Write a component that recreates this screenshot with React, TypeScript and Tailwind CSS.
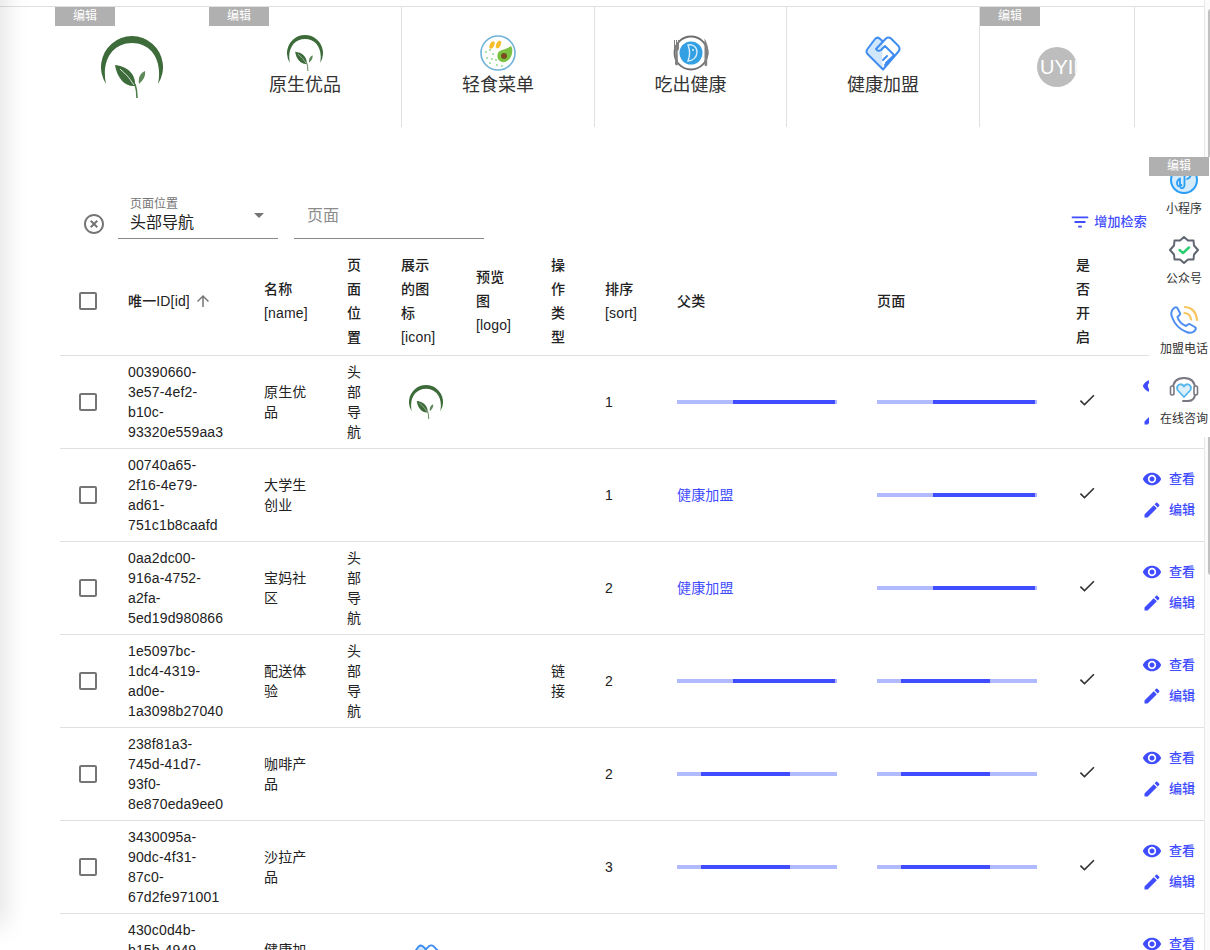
import React from 'react';

const BLUE = '#3f4cff';

const LeafLogo: React.FC<{ className: string }> = ({ className }) => (
  <svg viewBox="0 0 62 62" className={className}>
    <path d="M5 48 A31 31 0 1 1 57 48 C62 24 50 7 31 7 C12 7 0 24 5 48Z" fill="#3d6b3a" />
    <path d="M14 29 C25 30 35 37 34 50 C24 51 16 42 14 29Z" fill="#3d6b3a" />
    <path d="M19 33 Q28 40 33 49" stroke="#fff" strokeWidth="0.8" fill="none" />
    <path d="M44 35 C45 41 41 45 38 48 C37 42 39 37 44 35Z" fill="#5d8a58" />
    <path d="M34 48 Q36 54 36 62" stroke="#4f7d4b" strokeWidth="1.6" fill="none" />
  </svg>
);

const FoodIcon = () => (
  <svg viewBox="0 0 36 36" className="w-9 h-9">
    <circle cx="18" cy="18" r="17" fill="#fff" stroke="#6fb2d8" strokeWidth="1.6" />
    <ellipse cx="12" cy="10" rx="2.2" ry="4" transform="rotate(25 12 10)" fill="#f8bd2c" />
    <ellipse cx="18.5" cy="9.5" rx="2.2" ry="4" transform="rotate(25 18.5 9.5)" fill="#f8bd2c" />
    <path d="M31 11 C34 15 32 25 25 27 C19 28 16 23 18 18 C20 14 26 15 31 11Z" fill="#7cc242" />
    <circle cx="24" cy="21" r="3" fill="#7a4b1e" />
    <g fill="#8fdc8a">
      <circle cx="6" cy="17" r="1" />
      <circle cx="10" cy="15" r="1" />
      <circle cx="13" cy="19" r="1" />
      <circle cx="7" cy="23" r="1" />
      <circle cx="12" cy="24" r="1" />
      <circle cx="16" cy="25" r="1" />
      <circle cx="10" cy="28" r="1" />
      <circle cx="17" cy="30" r="1" />
      <circle cx="22" cy="31" r="1" />
    </g>
  </svg>
);

const PlateIcon = () => (
  <svg viewBox="0 0 36 36" className="w-9 h-9">
    <circle cx="18" cy="18" r="16.5" fill="#fff" stroke="#6f6f6f" strokeWidth="1.8" />
    <circle cx="18" cy="18" r="11.5" fill="#34a0e4" />
    <path d="M1 5 H2 V10 H3 V5 H4 V10 H5 V5 H6 V13 Q6 15.5 4.6 16 L5 29 Q3.5 32 2 29 L2.4 16 Q1 15.5 1 13Z" fill="#808080" />
    <path d="M31.5 3.5 Q36 11 35.5 20 L34.2 20 L34.2 30 Q33 32.5 31.5 30 Z" fill="#808080" />
    <path d="M15 10 C20 9 24 12 24 17 C24 22 20 26 15 26 C17 21 17 15 15 10Z" fill="none" stroke="#d6effc" strokeWidth="1.4" />
    <circle cx="20" cy="15" r="1" fill="#d6effc" />
  </svg>
);

const HandshakeIcon = () => (
  <svg viewBox="0 0 36 36" className="w-9 h-9">
    <path d="M18 34.5 L2.5 19 Q0.5 16.5 2.5 14 L10 4 Q12 1.5 14.5 3.5 L18 6.5 L21 3.5 Q23.5 1.5 26 3.5 L33.5 11 Q35.5 14 33.5 16.5Z" fill="#d0e6fb" />
    <path d="M18 6.5 L21 3.5 Q23.5 1.5 26 3.5 L33.5 11 Q35.5 14 33.5 16.5 L18 34.5 L17 24 L18 6.5Z" fill="#fff" />
    <path d="M18 34.5 L2.5 19 Q0.5 16.5 2.5 14 L10 4 Q12 1.5 14.5 3.5 L18 6.5 L21 3.5 Q23.5 1.5 26 3.5 L33.5 11 Q35.5 14 33.5 16.5Z" fill="none" stroke="#3f8cf0" strokeWidth="2" strokeLinejoin="round" />
    <path d="M18 6.5 L11 14 Q13 17 16 15 L20 11 L29 20 L20 30 M22 21 L18 25 M25 24 L21 28" fill="none" stroke="#3f8cf0" strokeWidth="2" strokeLinecap="round" strokeLinejoin="round" />
  </svg>
);

const MiniProgramIcon = () => (
  <svg viewBox="0 0 30 30" className="w-[30px] h-[30px]">
    <circle cx="15" cy="15" r="13" fill="#d3ebfc" stroke="#2a9df4" strokeWidth="2" />
    <path d="M12.5 20 Q8 23 8 18 Q8 15 11 13.5 M11 13.5 V20 Q11 24 14 23 Q15.5 22 15.5 20 V10 Q15.5 6.5 18.5 6.5 Q21.5 6.5 21.5 10 Q21.5 13 18 14" fill="none" stroke="#2a9df4" strokeWidth="1.8" strokeLinecap="round" />
  </svg>
);

const WechatBadgeIcon = () => (
  <svg viewBox="0 0 30 30" className="w-[30px] h-[30px]">
    <path d="M15 2 L19 5.5 L24.5 5.5 L25 10.5 L29 15 L25 19.5 L24.5 24.5 L19 24.5 L15 28 L11 24.5 L5.5 24.5 L5 19.5 L1 15 L5 10.5 L5.5 5.5 L11 5.5Z" fill="#fff" stroke="#5f6672" strokeWidth="2" strokeLinejoin="round" />
    <path d="M10.5 15 L14 18 L20 12.5" fill="none" stroke="#2ecc71" strokeWidth="2.4" strokeLinecap="round" strokeLinejoin="round" />
  </svg>
);

const PhoneIcon = () => (
  <svg viewBox="0 0 30 30" className="w-[30px] h-[30px]">
    <path d="M8 2.5 L11 8 Q11.5 9.5 10 10.5 L8.5 12 Q10 18 17 21 L19 19.5 Q20 18.5 21.5 19.5 L26.5 22.5 Q27.5 24 25.5 26 Q22.5 29 17.5 27 Q7 23 3 12 Q1 6.5 4.5 3.5 Q6.5 1.5 8 2.5Z" fill="#fff" stroke="#4f8ef0" strokeWidth="2" strokeLinejoin="round" />
    <path d="M16 2 Q27 3 28 15 M15.5 8 Q21.5 8.5 22 14.5" fill="none" stroke="#f7c55e" strokeWidth="2.2" strokeLinecap="round" />
  </svg>
);

const HeadsetIcon = () => (
  <svg viewBox="0 0 30 30" className="w-[30px] h-[30px]">
    <path d="M4 16 V14 Q4 3 15 3 Q26 3 26 14 V16" fill="none" stroke="#7a7782" strokeWidth="2" />
    <rect x="1.5" y="11" width="3.5" height="9" rx="1.7" fill="#fff" stroke="#7a7782" strokeWidth="1.6" />
    <rect x="25" y="11" width="3.5" height="9" rx="1.7" fill="#fff" stroke="#7a7782" strokeWidth="1.6" />
    <path d="M15 22 L8.5 15 Q7 11 10.5 9.5 Q13.5 8.5 15 11.5 Q16.5 8.5 19.5 9.5 Q23 11 21.5 15Z" fill="#dcf0fc" stroke="#55b5ee" strokeWidth="1.8" strokeLinejoin="round" />
    <path d="M26 20 Q25 26 19 26 H14" fill="none" stroke="#7a7782" strokeWidth="2" strokeLinecap="round" />
  </svg>
);

const MuiIcon: React.FC<{ d: string; className: string; color: string }> = ({ d, className, color }) => (
  <svg viewBox="0 0 24 24" className={className} fill={color}>
    <path d={d} />
  </svg>
);

const EditBadge = () => (
  <div className="absolute left-0 top-0 z-10 w-[60px] h-[19px] bg-[#b0b0b0] text-white text-xs leading-[19px] text-center">编辑</div>
);

const Checkbox = () => <div className="w-[18px] h-[18px] rounded-[2px] border-2 border-[#757575]" />;

const Bar: React.FC<{ kind: 'a' | 'b' }> = ({ kind }) => (
  <div className="w-40 h-1 bg-[#b2baff]">
    <div className={kind === 'a' ? 'h-full ml-[56px] w-[102px] bg-[#3f4cff]' : 'h-full ml-[24px] w-[89px] bg-[#3f4cff]'} />
  </div>
);

type Row = {
  id: string;
  name: string;
  pos?: boolean;
  icon?: 'leaf' | 'hand';
  action?: string;
  sort?: number;
  parent?: 'a' | 'b' | 'link';
  page?: 'a' | 'b';
};

const ROWS: Row[] = [
  { id: '00390660-3e57-4ef2-b10c-93320e559aa3', name: '原生优品', pos: true, icon: 'leaf', sort: 1, parent: 'a', page: 'a' },
  { id: '00740a65-2f16-4e79-ad61-751c1b8caafd', name: '大学生创业', sort: 1, parent: 'link', page: 'a' },
  { id: '0aa2dc00-916a-4752-a2fa-5ed19d980866', name: '宝妈社区', pos: true, sort: 2, parent: 'link', page: 'a' },
  { id: '1e5097bc-1dc4-4319-ad0e-1a3098b27040', name: '配送体验', pos: true, action: '链接', sort: 2, parent: 'a', page: 'b' },
  { id: '238f81a3-745d-41d7-93f0-8e870eda9ee0', name: '咖啡产品', sort: 2, parent: 'b', page: 'b' },
  { id: '3430095a-90dc-4f31-87c0-67d2fe971001', name: '沙拉产品', sort: 3, parent: 'b', page: 'b' },
  { id: '430c0d4b-b15b-4949-a1c2-7f3e8d90b6c4', name: '健康加盟', icon: 'hand' },
];

const NAV = [
  { label: '轻食菜单', icon: <FoodIcon />, width: 'w-[193px]' },
  { label: '吃出健康', icon: <PlateIcon />, width: 'w-[192px]' },
  { label: '健康加盟', icon: <HandshakeIcon />, width: 'w-[193px]' },
];

const SIDE = [
  { label: '小程序', icon: <MiniProgramIcon /> },
  { label: '公众号', icon: <WechatBadgeIcon /> },
  { label: '加盟电话', icon: <PhoneIcon /> },
  { label: '在线咨询', icon: <HeadsetIcon /> },
];

const th = 'pl-4 pr-[17px] border-b border-[#e0e0e0] text-left align-middle font-medium text-sm leading-6 tracking-[0.15px] text-[#222]';
const td = 'pl-4 pr-[17px] py-1.5 border-b border-[#e0e0e0] align-middle text-sm leading-5 tracking-[0.15px] text-[#222]';

const EYE = 'M12 4.5C7 4.5 2.73 7.61 1 12c1.73 4.39 6 7.5 11 7.5s9.27-3.11 11-7.5c-1.73-4.39-6-7.5-11-7.5zM12 17c-2.76 0-5-2.24-5-5s2.24-5 5-5 5 2.24 5 5-2.24 5-5 5zm0-8c-1.66 0-3 1.34-3 3s1.34 3 3 3 3-1.34 3-3-1.34-3-3-3z';
const PEN = 'M3 17.25V21h3.75L17.81 9.94l-3.75-3.75L3 17.25zM20.71 7.04c.39-.39.39-1.02 0-1.41l-2.34-2.34a.9959.9959 0 00-1.41 0l-1.83 1.83 3.75 3.75 1.83-1.83z';

const App: React.FC = () => {
  return (
    <div className="relative flex h-[950px] overflow-hidden bg-white font-['Liberation_Sans','Noto_Sans_CJK_SC',sans-serif] text-[#333]">
      <div className="absolute -left-[12px] -top-[30px] w-[12px] h-[955px] shadow-[0_0_26px_rgba(0,0,0,0.22)]" />

      <main className="flex-1 min-w-0 pt-[6px]">
        <div className="border-t border-[#e0e0e0] pl-[55px]">
          <nav className="flex h-[120px]">
            <div className="relative w-[154px] flex items-center justify-center">
              <EditBadge />
              <LeafLogo className="w-[62px] h-[62px]" />
            </div>
            <div className="relative w-[193px] border-r border-[#e0e0e0] flex flex-col items-center pt-[28px]">
              <EditBadge />
              <LeafLogo className="w-9 h-9" />
              <span className="text-lg leading-7">原生优品</span>
            </div>
            {NAV.map((item) => (
              <div key={item.label} className={`${item.width} border-r border-[#e0e0e0] flex flex-col items-center pt-[28px]`}>
                {item.icon}
                <span className="text-lg leading-7">{item.label}</span>
              </div>
            ))}
            <div className="relative w-[155px] border-r border-[#e0e0e0] flex items-center justify-center">
              <EditBadge />
              <div className="w-10 h-10 rounded-full bg-[#bdbdbd] text-white text-xl leading-10 overflow-hidden whitespace-nowrap pl-[3px]">UYII</div>
            </div>
          </nav>

          <div className="flex items-end mt-[68px] pl-[27px]">
            <div className="mb-[3px]">
              <MuiIcon
                className="w-6 h-6 block"
                color="#757575"
                d="M14.59 8L12 10.59 9.41 8 8 9.41 10.59 12 8 14.59 9.41 16 12 13.41 14.59 16 16 14.59 13.41 12 16 9.41 14.59 8zM12 2C6.47 2 2 6.47 2 12s4.47 10 10 10 10-4.47 10-10S17.53 2 12 2zm0 18c-4.41 0-8-3.59-8-8s3.59-8 8-8 8 3.59 8 8-3.59 8-8 8z"
              />
            </div>
            <div className="relative ml-3 w-40 h-11 pt-px pl-3 border-b border-[#8a8a8a]">
              <div className="text-xs leading-4 text-[#757575]">页面位置</div>
              <div className="text-base leading-[22px] text-[#222]">头部导航</div>
              <MuiIcon className="absolute right-[7px] top-[8px] w-6 h-6" color="#757575" d="M7 10l5 5 5-5z" />
            </div>
            <div className="ml-4 w-[190px] h-11 pl-[13px] pb-px flex items-center border-b border-[#8a8a8a] text-base text-[#8c8c8c]">页面</div>
            <div className="ml-auto mr-[57px] mb-[6px] flex items-center gap-[3px] text-[13px] leading-5 font-medium tracking-[0.2px] text-[#3f4cff]">
              <MuiIcon className="w-[22px] h-[22px]" color={BLUE} d="M10 18h4v-2h-4v2zM3 6v2h18V6H3zm3 7h12v-2H6v2z" />
              增加检索
            </div>
          </div>

          <div className="mt-2 pl-[5px]">
            <table className="w-[1144px] table-fixed border-separate border-spacing-0">
              <colgroup>
                <col className="w-[52px]" />
                <col className="w-[136px]" />
                <col className="w-[83px]" />
                <col className="w-[54px]" />
                <col className="w-[75px]" />
                <col className="w-[75px]" />
                <col className="w-[54px]" />
                <col className="w-[72px]" />
                <col className="w-[200px]" />
                <col className="w-[199px]" />
                <col className="w-[67px]" />
                <col className="w-[77px]" />
              </colgroup>
              <thead>
                <tr className="h-[109px]">
                  <th className="pl-[19px] border-b border-[#e0e0e0] align-middle">
                    <Checkbox />
                  </th>
                  <th className={th}>
                    <div className="flex items-center whitespace-nowrap">
                      唯一ID[id]
                      <MuiIcon
                        className="w-[18px] h-[18px] ml-[4px]"
                        color="#757575"
                        d="M4 12l1.41 1.41L11 7.83V20h2V7.83l5.58 5.59L20 12l-8-8-8 8z"
                      />
                    </div>
                  </th>
                  <th className={th}>名称[name]</th>
                  <th className={th}>页面位置</th>
                  <th className={th}>展示的图标[icon]</th>
                  <th className={th}>预览图[logo]</th>
                  <th className={th}>操作类型</th>
                  <th className={th}>排序[sort]</th>
                  <th className={th}>父类</th>
                  <th className={th}>页面</th>
                  <th className="pl-4 pr-[30px] border-b border-[#e0e0e0] text-left align-middle font-medium text-sm leading-6 tracking-[0.15px] text-[#222]">是否开启</th>
                  <th className={th} />
                </tr>
              </thead>
              <tbody>
                {ROWS.map((row) => (
                  <tr key={row.id}>
                    <td className="pl-[19px] border-b border-[#e0e0e0] align-middle">
                      <Checkbox />
                    </td>
                    <td className="pl-4 pr-[23px] py-1.5 border-b border-[#e0e0e0] align-middle text-sm leading-5 tracking-[0.15px] text-[#222]">{row.id}</td>
                    <td className={td}>{row.name}</td>
                    <td className={td}>{row.pos && '头部导航'}</td>
                    <td className={td}>
                      {row.icon === 'leaf' && <LeafLogo className="w-[34px] h-[34px] ml-2" />}
                      {row.icon === 'hand' && (
                        <div className="ml-2 w-[34px] h-[34px] [&>svg]:w-[34px] [&>svg]:h-[34px]">
                          <HandshakeIcon />
                        </div>
                      )}
                    </td>
                    <td className={td} />
                    <td className={td}>{row.action}</td>
                    <td className={td}>{row.sort}</td>
                    <td className={td}>
                      {row.parent === 'link' ? (
                        <span className="text-[#3f4cff]">健康加盟</span>
                      ) : (
                        row.parent && <Bar kind={row.parent} />
                      )}
                    </td>
                    <td className={td}>{row.page && <Bar kind={row.page} />}</td>
                    <td className={td}>
                      <MuiIcon className="w-5 h-5 -mt-[4px] ml-px" color="#333" d="M9 16.2L4.8 12l-1.4 1.4L9 19 21 7l-1.4-1.4L9 16.2z" />
                    </td>
                    <td className="pl-[15px] border-b border-[#e0e0e0] align-middle">
                      <div className="flex flex-col gap-[11px] -mt-[1px] text-[13px] leading-5 font-medium text-[#3f4cff] whitespace-nowrap">
                        <div className="flex items-center gap-[7px]">
                          <MuiIcon className="w-5 h-5" color={BLUE} d={EYE} />
                          查看
                        </div>
                        <div className="flex items-center gap-[7px]">
                          <MuiIcon className="w-5 h-5" color={BLUE} d={PEN} />
                          编辑
                        </div>
                      </div>
                    </td>
                  </tr>
                ))}
              </tbody>
            </table>
          </div>
        </div>
      </main>

      <div className="w-[6px] shrink-0 border-l border-[#e8e8e8] bg-[#fbfbfb] pt-[9px] pl-[3px]">
        <div className="w-[3px] h-[566px] bg-[#c1c1c1] rounded-l-sm" />
      </div>

      <aside className="absolute left-[1149px] top-[157px] w-[70px] h-[280px] bg-white pt-[8px] flex flex-col items-center gap-[16px] text-xs leading-5 text-[#333]">
        <EditBadge />
        {SIDE.map((item) => (
          <div key={item.label} className="flex flex-col items-center whitespace-nowrap">
            {item.icon}
            <span className="mt-[4px]">{item.label}</span>
          </div>
        ))}
      </aside>
    </div>
  );
};

export default App;
